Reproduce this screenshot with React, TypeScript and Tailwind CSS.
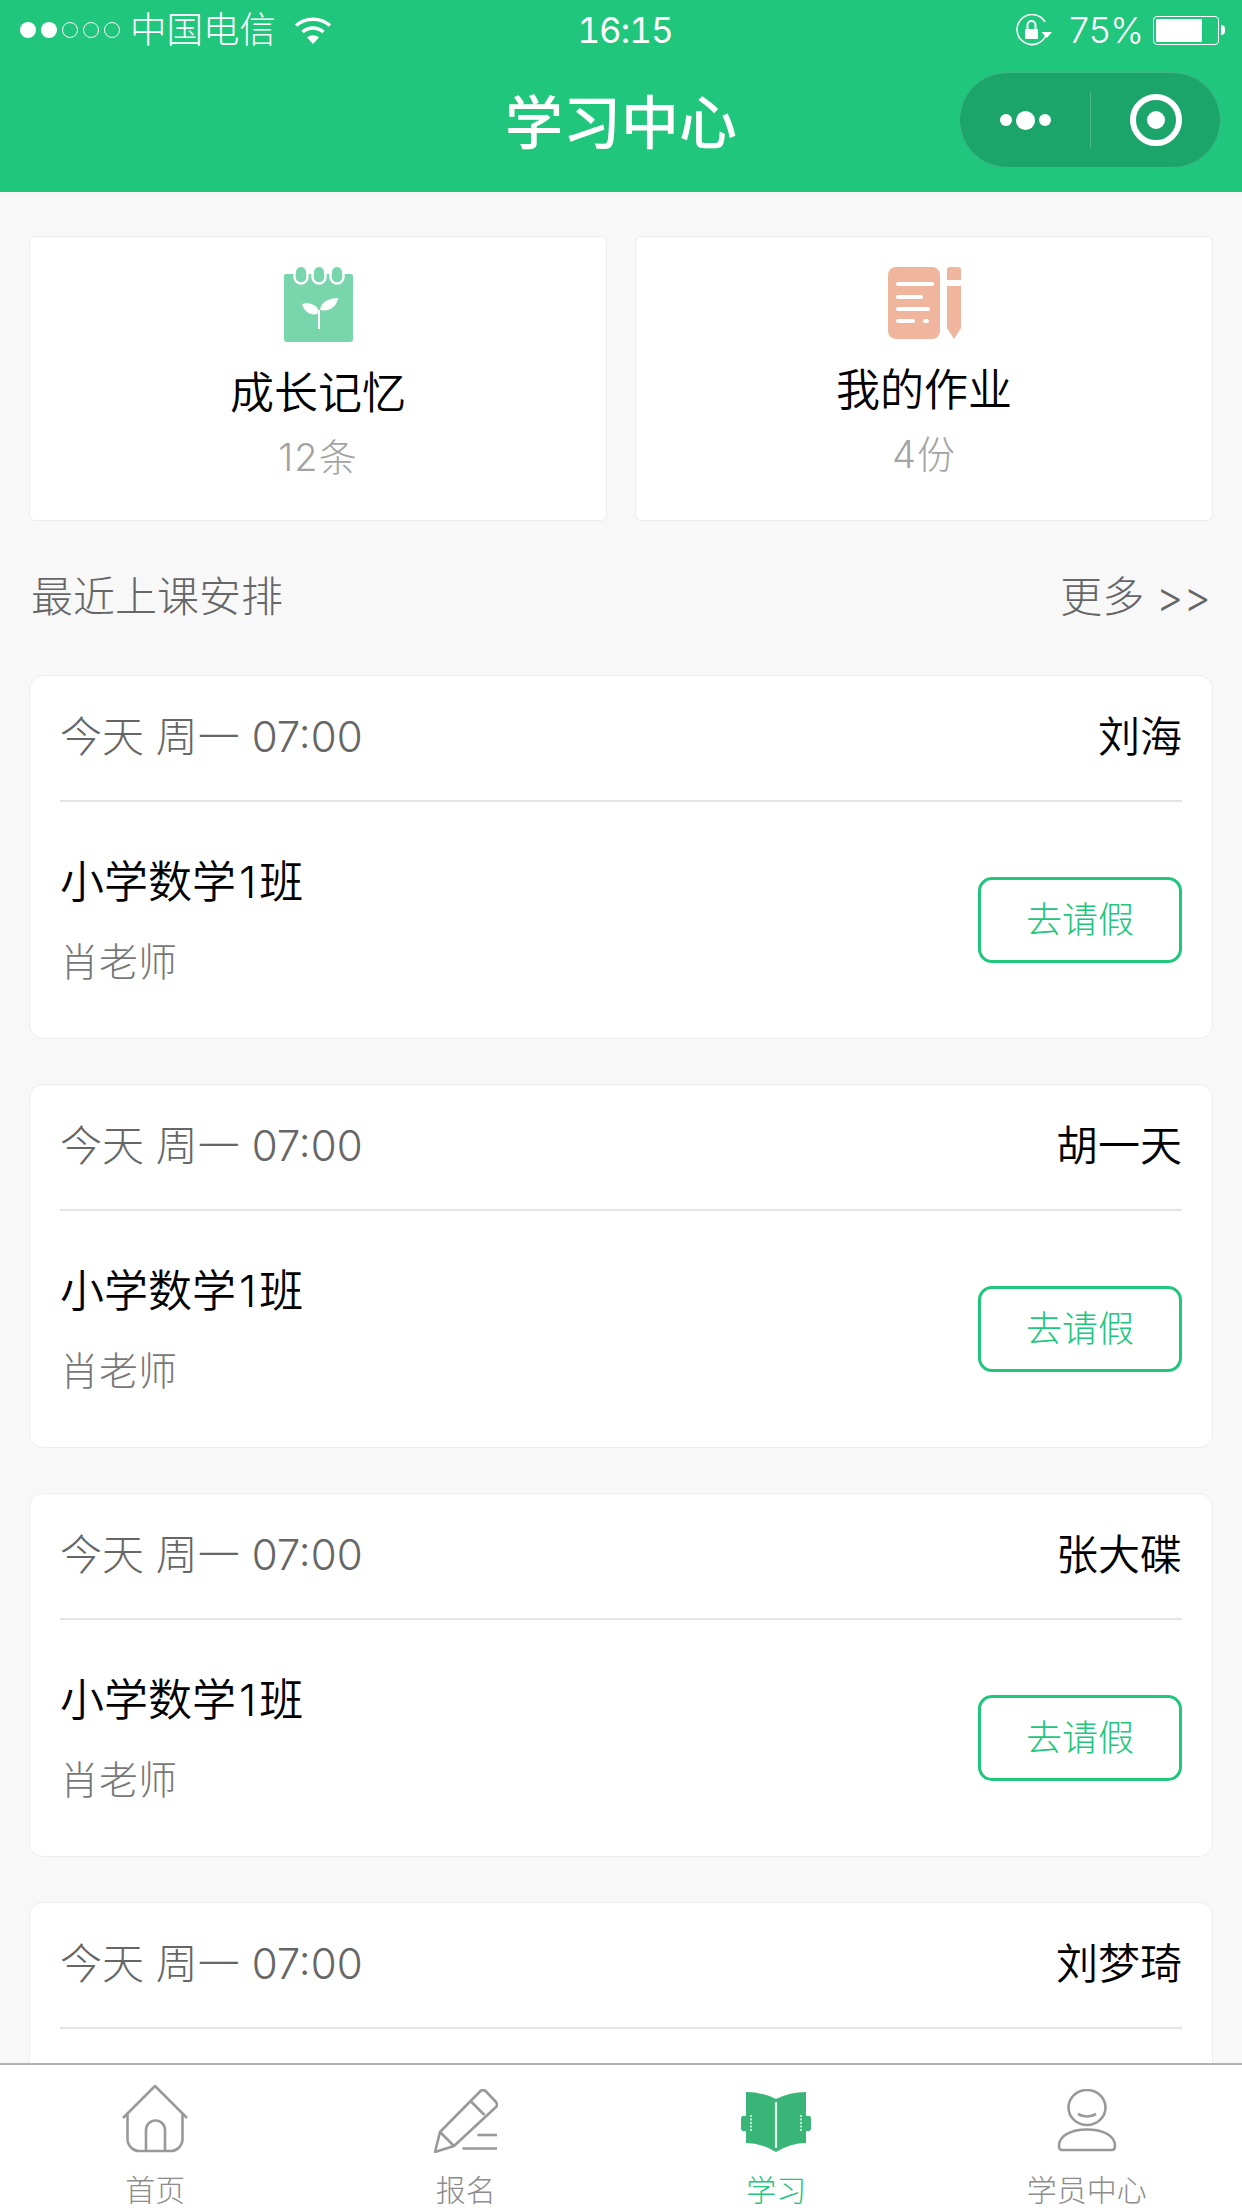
const students = ["刘海", "胡一天", "张大碟", "刘梦琦"];

function Wifi() {
  return (
    <svg width="38" height="28" viewBox="0 0 38 28" fill="none" stroke="#fff" strokeWidth="3.500">
      <path d="M2 9.500C11.500 1 26.500 1 36 9.500" />
      <path d="M8.500 16C14.500 10.500 23.500 10.500 29.500 16" />
      <path d="M19 28L13 21.500C16.500 18.500 21.500 18.500 25 21.500Z" fill="#fff" stroke="none" />
    </svg>
  );
}

function RotationLock() {
  return (
    <svg width="36" height="32" viewBox="0 0 36 32" fill="none">
      <path d="M30 21A15 15 0 1 1 29 8" stroke="#fff" strokeWidth="1.600" />
      <path d="M25.500 18H36L30.800 24Z" fill="#fff" />
      <rect x="9" y="15" width="13" height="10" rx="1" fill="#fff" />
      <path d="M11.500 15V11A4 4 0 0 1 19.500 11V15" stroke="#fff" strokeWidth="2" />
    </svg>
  );
}

function Battery() {
  return (
    <div className="flex items-center">
      <div className="h-[29px] w-[66px] rounded-[4px] border border-white p-[2px]">
        <div className="h-full w-[46px] rounded-[1px] bg-white" />
      </div>
      <div className="ml-[2px] h-[10px] w-[4px] rounded-r-[4px] bg-white" />
    </div>
  );
}

function Notebook() {
  return (
    <svg width="69" height="75" viewBox="0 0 69 75">
      <path d="M2 7H67A2 2 0 0 1 69 9V72A3 3 0 0 1 66 75H3A3 3 0 0 1 0 72V9A2 2 0 0 1 2 7Z" fill="#79d5ab" />
      <g fill="#79d5ab">
        <rect x="12" y="0" width="10" height="15" rx="5" />
        <rect x="30" y="0" width="10" height="15" rx="5" />
        <rect x="48" y="0" width="10" height="15" rx="5" />
      </g>
      <g fill="none" stroke="#fff" strokeWidth="2.400">
        <path d="M10.500 6V10A6.500 6.500 0 0 0 23.500 10V6" />
        <path d="M28.500 6V10A6.500 6.500 0 0 0 41.500 10V6" />
        <path d="M46.500 6V10A6.500 6.500 0 0 0 59.500 10V6" />
      </g>
      <path d="M33.500 47C26 49 20 44 18 37C24 35 31 37 34 42Z" fill="#fff" />
      <path d="M36 43C37 35 45 31 54 31C53 39 46 45 36 43Z" fill="#fff" />
      <path d="M35 43V62" stroke="#fff" strokeWidth="2" />
    </svg>
  );
}

function Homework() {
  return (
    <svg width="73" height="72" viewBox="0 0 73 72">
      <path d="M8 0H44A8 8 0 0 1 52 8V64A8 8 0 0 1 44 72H8A8 8 0 0 1 0 64V8A8 8 0 0 1 8 0Z" fill="#f0b69d" />
      <g fill="none" stroke="#fff" strokeWidth="4" strokeLinecap="round">
        <path d="M10 17H44" />
        <path d="M10 30H33" />
        <path d="M10 42H40" />
        <path d="M10 54H25" />
        <path d="M37 54H39" />
      </g>
      <path d="M59 3A3 3 0 0 1 62 0H70A3 3 0 0 1 73 3V13H59Z" fill="#f0b69d" />
      <path d="M59 19H73V61L66 72L59 61Z" fill="#f0b69d" />
    </svg>
  );
}

function HomeIcon() {
  return (
    <svg width="66" height="68" viewBox="0 0 66 68" fill="none" stroke="#999" strokeWidth="2.600" strokeLinejoin="round">
      <path d="M1 33L33 1L65 33" />
      <path d="M5.500 29V54A12 12 0 0 0 17.500 66H48.500A12 12 0 0 0 60.500 54V29" />
      <path d="M24 66V45A9.500 9.500 0 0 1 43 45V66" />
    </svg>
  );
}

function PencilIcon() {
  return (
    <svg width="64" height="64" viewBox="0 0 64 64" fill="none" stroke="#999" strokeWidth="2.600" strokeLinejoin="round">
      <path d="M6 43L46 2.500Q49 -0.500 52 2.500L62 13Q64 16 62 18L20 57L1 63Z" />
      <path d="M6 43L20 57" />
      <path d="M37.500 13L50.500 26" />
      <path d="M43.500 46H63" />
      <path d="M28.500 59.500H63" />
    </svg>
  );
}

function BookIcon() {
  return (
    <svg width="70" height="62" viewBox="0 0 70 62" fill="#3ab578">
      <path d="M5 1Q21 1 35 8Q49 1 65 1V52Q50 52 35 61Q20 52 5 52Z" />
      <path d="M9 25H2Q0 25 0 28V37Q0 40 2 40H9Z" />
      <path d="M61 25H68Q70 25 70 28V37Q70 40 68 40H61Z" />
      <path d="M10 24V41M60 24V41" stroke="#fff" strokeWidth="1.400" strokeDasharray="2 1.500" fill="none" />
      <path d="M35 11V57" stroke="#dff3e9" strokeWidth="2.200" fill="none" />
    </svg>
  );
}

function PersonIcon() {
  return (
    <svg width="60" height="64" viewBox="0 0 60 64" fill="none" stroke="#999" strokeWidth="2.600">
      <ellipse cx="30" cy="18.500" rx="18.500" ry="17.500" />
      <path d="M21 25Q30 30 39 25" />
      <path d="M2 57C2 46 15 40.500 30 40.500C45 40.500 58 46 58 57Q58 61 55 61H5Q2 61 2 57Z" />
    </svg>
  );
}

function Summary({ title, count, children, compact }: { title: string; count: string; children: React.ReactNode; compact?: boolean }) {
  return (
    <div className="flex h-[285px] flex-col items-center rounded-[6px] border border-[#ededed] bg-white pt-[30px]">
      <div className={compact ? "h-[72px]" : "h-[75px]"}>{children}</div>
      <div className="mt-[19px] text-[44px] leading-[64px] font-[350] text-black">{title}</div>
      <div className="mt-[4px] text-[38px] leading-[56px] font-light tracking-[1px] text-[#a3a3a3]">{count}</div>
    </div>
  );
}

function Lesson({ name }: { name: string }) {
  return (
    <div className="h-[364px] shrink-0 rounded-[14px] border border-[#ededed] bg-white px-[30px]">
      <div className="flex h-[126px] items-center justify-between border-b-2 border-[#e4e4e4] pb-[3px]">
        <span className="text-[42px] font-light text-[#666]">今天 周一 07:00</span>
        <span className="text-[42px] font-[350] text-black">{name}</span>
      </div>
      <div className="flex items-center justify-between pt-[48px]">
        <div>
          <div className="text-[44px] leading-[64px] font-[350] text-black">
            小学数学<span className="mx-[3px]">1</span>班
          </div>
          <div className="mt-[16px] text-[39px] leading-[64px] font-light text-[#777]">肖老师</div>
        </div>
        <button className="mt-[-5px] h-[86px] w-[204px] rounded-[14px] border-[3px] border-[#20c67c] text-[36px] font-light text-[#20c67c]">
          去请假
        </button>
      </div>
    </div>
  );
}

function Tab({ label, active, children }: { label: string; active?: boolean; children: React.ReactNode }) {
  return (
    <div className="flex flex-col items-center">
      <div className="flex h-[90px] items-end pb-[2px]">{children}</div>
      <div className={"mt-[20px] text-[30px] leading-[30px] font-light " + (active ? "text-[#20c67c]" : "text-[#8c8c8c]")}>{label}</div>
    </div>
  );
}

export default function App() {
  return (
    <div className="flex h-[2208px] w-[1242px] flex-col overflow-hidden bg-[#f8f8f8] font-['Inter','Noto_Sans_CJK_SC',sans-serif]">
      <header className="h-[192px] shrink-0 bg-[#20c67c] text-white">
        <div className="grid h-[58px] grid-cols-3 items-center pr-[17px] pl-[20px] pt-[2px]">
          <div className="flex items-center">
            <div className="flex gap-[5px]">
              <span className="h-[16px] w-[16px] rounded-full bg-white" />
              <span className="h-[16px] w-[16px] rounded-full bg-white" />
              <span className="h-[16px] w-[16px] rounded-full border border-white" />
              <span className="h-[16px] w-[16px] rounded-full border border-white" />
              <span className="h-[16px] w-[16px] rounded-full border border-white" />
            </div>
            <span className="ml-[10px] text-[36.500px] font-light leading-[50px]">中国电信</span>
            <span className="ml-[18px] flex"><Wifi /></span>
          </div>
          <div className="ml-[5px] text-center text-[35px] leading-[50px] tracking-[-1px] tabular-nums">16:15</div>
          <div className="flex items-center justify-end">
            <RotationLock />
            <span className="ml-[17px] text-[36px] font-light leading-[50px]">75%</span>
            <span className="ml-[9px]"><Battery /></span>
          </div>
        </div>
        <div className="relative flex h-[134px] items-center justify-center pb-[4px]">
          <h1 className="text-[58px] leading-[80px] font-medium">学习中心</h1>
          <div className="absolute top-[14px] right-[21px] flex h-[96px] w-[262px] items-center rounded-full border border-[#3fb985] bg-[#1ba56b]">
            <div className="flex w-[130px] items-center justify-center gap-[4px]">
              <span className="h-[12px] w-[12px] rounded-full bg-white" />
              <span className="h-[19px] w-[19px] rounded-full bg-white" />
              <span className="h-[12px] w-[12px] rounded-full bg-white" />
            </div>
            <div className="h-[56px] w-px bg-[#4cba8b]" />
            <div className="flex flex-1 items-center justify-center">
              <span className="flex h-[52px] w-[52px] items-center justify-center rounded-full border-[6px] border-white">
                <span className="h-[18px] w-[18px] rounded-full bg-white" />
              </span>
            </div>
          </div>
        </div>
      </header>

      <main className="flex min-h-0 flex-1 flex-col overflow-hidden px-[29px] pt-[44px]">
        <div className="grid grid-cols-2 gap-[28px]">
          <Summary title="成长记忆" count="12条"><Notebook /></Summary>
          <Summary title="我的作业" count="4份" compact><Homework /></Summary>
        </div>
        <div className="flex h-[154px] shrink-0 items-center justify-between px-[2px] pb-[4px]">
          <span className="text-[42px] font-light text-[#666]">最近上课安排</span>
          <span className="text-[42px] font-light text-[#666]">更多 &gt;&gt;</span>
        </div>
        <div className="flex flex-col gap-[45px]">
          {students.map((name) => (
            <Lesson key={name} name={name} />
          ))}
        </div>
      </main>

      <nav className="grid h-[145px] shrink-0 grid-cols-4 overflow-hidden border-t-2 border-[#b2b2b2] bg-white">
        <Tab label="首页"><HomeIcon /></Tab>
        <Tab label="报名"><PencilIcon /></Tab>
        <Tab label="学习" active><BookIcon /></Tab>
        <Tab label="学员中心"><PersonIcon /></Tab>
      </nav>
    </div>
  );
}
